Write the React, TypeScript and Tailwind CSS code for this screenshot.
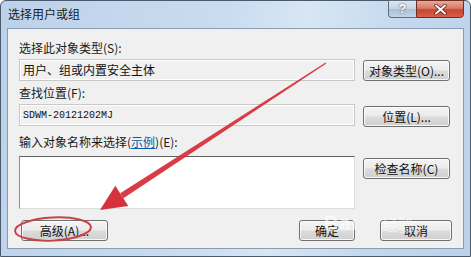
const cjk = { fontFamily: '"Noto Sans CJK SC", "Liberation Sans", sans-serif' };

function WinButton({ label, className = "" }: { label: string; className?: string }) {
  return (
    <div
      className={
        "h-[21px] flex items-center justify-center rounded-[3px] border border-[#707070] text-[12px] text-[#111] bg-[linear-gradient(to_bottom,#f4f4f4_0%,#ebebeb_48%,#dcdcdc_52%,#cfcfcf_100%)] shadow-[inset_0_0_0_1px_rgba(255,255,255,0.8)] " +
        className
      }
      style={cjk}
    >
      {label}
    </div>
  );
}

function ReadField({ value, mono }: { value: string; mono?: boolean }) {
  return (
    <div className="w-[336px] h-[22px] border border-[#c8c8c8] shadow-[inset_0_0_0_1px_#ffffff] bg-[#f0f0f0] flex items-center px-[3px]">
      <span
        className={mono ? "text-[10px] text-[#111]" : "text-[12px] text-[#111]"}
        style={mono ? { fontFamily: '"Liberation Mono", monospace' } : cjk}
      >
        {value}
      </span>
    </div>
  );
}

export default function App() {
  return (
    <div className="w-[471px] h-[257px] bg-white relative overflow-hidden">
      <div className="w-[471px] h-[257px] rounded-t-[6px] border border-[#4a5a6a] bg-[linear-gradient(100deg,#bcd2ea_0%,#c9dcf0_45%,#d8e6f3_60%,#c3d8ee_80%,#bcd2ea_100%)] flex flex-col">
        {/* title bar */}
        <div className="h-[27px] flex items-start justify-between">
          <div className="pl-[7px] pt-[4px] text-[12px] text-[#1a1a1a]" style={cjk}>
            选择用户或组
          </div>
          <div className="flex mr-[6px] -mt-px">
            <div className="w-[28px] h-[18px] rounded-bl-[4px] border border-[#5e6f82] border-r-0 bg-[linear-gradient(to_bottom,#dbe6f2_0%,#c4d4e6_50%,#a9bdd4_51%,#c2d6ea_100%)] flex items-center justify-center text-[12px] font-bold text-white [text-shadow:0_0_2px_#334]" style={{ fontFamily: '"Liberation Sans", sans-serif' }}>
              ?
            </div>
            <div className="w-[48px] h-[18px] rounded-br-[4px] border border-[#6e2e26] bg-[linear-gradient(to_bottom,#e8a898_0%,#d97a68_45%,#c5462f_55%,#d7604a_100%)] flex items-center justify-center">
              <svg width="13" height="11" viewBox="0 0 13 11">
                <path d="M2 1.5 L11 9.5 M11 1.5 L2 9.5" stroke="#5a1a12" strokeWidth="3.4" strokeLinecap="round" />
                <path d="M2 1.5 L11 9.5 M11 1.5 L2 9.5" stroke="#ffffff" strokeWidth="2" strokeLinecap="round" />
              </svg>
            </div>
          </div>
        </div>

        {/* client area */}
        <div className="mx-[6px] h-[221px] border border-[#8a9cb0] bg-[#f0f0f0] px-[11px] flex flex-col">
          <div className="mt-[10px] h-[18px] text-[12px] text-[#1a1a1a] leading-[18px]" style={cjk}>
            选择此对象类型(S):
          </div>
          <div className="mt-[2px] flex items-start gap-[8px]">
            <ReadField value="用户、组或内置安全主体" />
            <WinButton label="对象类型(O)..." className="w-[87px] mt-px" />
          </div>

          <div className="mt-[3px] h-[18px] text-[12px] text-[#1a1a1a] leading-[18px]" style={cjk}>
            查找位置(F):
          </div>
          <div className="mt-[2px] flex items-start gap-[8px]">
            <ReadField value="SDWM-20121202MJ" mono />
            <WinButton label="位置(L)..." className="w-[87px] mt-[2px]" />
          </div>

          <div className="mt-[6px] h-[18px] text-[12px] text-[#1a1a1a] leading-[18px]" style={cjk}>
            输入对象名称来选择(<span className="text-[#0b5aa8] underline">示例</span>)(E):
          </div>
          <div className="mt-[5px] flex items-start gap-[8px]">
            <div className="w-[336px] h-[53px] bg-white border border-t-[#5f5f5f] border-l-[#8d8d8d] border-r-[#dcdcdc] border-b-[#dcdcdc]" />
            <WinButton label="检查名称(C)" className="w-[87px] mt-[2px]" />
          </div>

          <div className="mt-[11px] flex items-start">
            <WinButton label="高级(A)..." className="w-[87px] ml-[2px]" />
            <div className="flex-1" />
            <WinButton label="确定" className="w-[56px]" />
            <WinButton label="取消" className="w-[72px] ml-[25px]" />
          </div>
        </div>
      </div>

      {/* baidu watermark */}
      <div className="absolute left-[324px] top-[208px] flex items-end text-white/60 pointer-events-none" style={{ fontFamily: '"Liberation Sans", sans-serif' }}>
        <span className="text-[20px] font-bold tracking-[1px]">Bai</span>
      </div>
      <div className="absolute left-[382px] top-[212px] text-[16px] text-white/50 pointer-events-none" style={cjk}>
        经验
      </div>

      {/* red annotation */}
      <svg className="absolute left-0 top-0 pointer-events-none" width="471" height="257" viewBox="0 0 471 257">
        <polygon points="326.3,63.4 325.7,62.6 120.2,193.3 123.4,198.3" fill="#d7323c" opacity="0.95" />
        <polygon points="100,210 115.3,185.7 128.3,205.9" fill="#d7323c" />
        <ellipse cx="53" cy="229" rx="38" ry="11.5" fill="none" stroke="#c8424a" strokeWidth="2" transform="rotate(-3 53 229)" />
      </svg>
    </div>
  );
}
